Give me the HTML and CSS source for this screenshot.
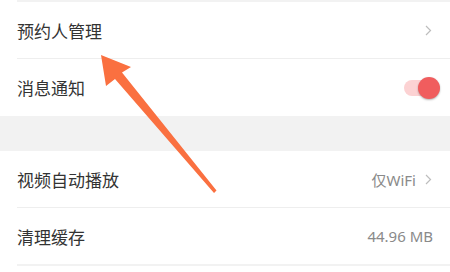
FILE: index.html
```html
<!DOCTYPE html>
<html lang="zh">
<head>
<meta charset="utf-8">
<link rel="stylesheet" href="styles.css">
</head>
<body>
<div class="page">
  <div class="top-line"></div>
  <div class="group">
    <div class="row">
      <span class="label">预约人管理</span>
      <span class="value"><svg class="chev" viewBox="0 0 7 11" width="7" height="11"><path d="M1 1 L5.5 5.5 L1 10" fill="none" stroke="#bdbdbd" stroke-width="1.2"/></svg></span>
    </div>
    <div class="row last">
      <span class="label">消息通知</span>
      <span class="toggle"><span class="knob"></span></span>
    </div>
  </div>
  <div class="gap"></div>
  <div class="group">
    <div class="row">
      <span class="label">视频自动播放</span>
      <span class="value">仅WiFi<svg class="chev" viewBox="0 0 7 11" width="7" height="11"><path d="M1 1 L5.5 5.5 L1 10" fill="none" stroke="#bdbdbd" stroke-width="1.2"/></svg></span>
    </div>
    <div class="row bottom">
      <span class="label">清理缓存</span>
      <span class="value">44.96 MB</span>
    </div>
  </div>
  <svg class="arrow" viewBox="0 0 450 272" width="450" height="272">
    <polygon points="101,55 131,67 122,72.5 216.5,190.5 214,193 115,79 106,86" fill="#fa7040"/>
  </svg>
</div>
</body>
</html>
```
FILE: styles.css
```css
* { box-sizing: border-box; }
html, body { margin: 0; padding: 0; background: #fff; }
.page {
  position: relative;
  width: 450px;
  height: 272px;
  overflow: hidden;
  font-family: "Noto Sans CJK SC", "Noto Sans", sans-serif;
  color: #333;
}
.top-line {
  height: 2px;
  margin-left: 17px;
  background: #f2f2f2;
}
.group { background: #fff; }
.row {
  display: flex;
  align-items: center;
  justify-content: space-between;
  height: 57px;
  margin-left: 17px;
  padding-right: 17px;
  border-bottom: 1px solid #eeeeee;
}
.row.last { border-bottom: none; height: 57px; }
.row.bottom { border-bottom: 2px solid #f2f2f2; height: 58px; }
.label {
  font-size: 17px;
  line-height: 1;
  color: #333;
}
.value {
  display: flex;
  align-items: center;
  gap: 9px;
  font-family: "Noto Sans", "Noto Sans CJK SC", sans-serif;
  font-size: 15px;
  color: #8a8a8a;
}
.value .chev { display: block; margin-right: 1px; }
.gap {
  height: 35px;
  background: #f2f2f2;
}
.toggle {
  position: relative;
  width: 36px;
  height: 22px;
  margin-right: -7px;
}
.toggle::before {
  content: "";
  position: absolute;
  left: 0;
  top: 3px;
  width: 32px;
  height: 16px;
  border-radius: 8px;
  background: #fcd2d3;
}
.knob {
  position: absolute;
  right: 0;
  top: 0;
  width: 22px;
  height: 22px;
  border-radius: 50%;
  background: #f05d5e;
  box-shadow: 0 1px 2px rgba(0,0,0,0.3);
}
.arrow {
  position: absolute;
  left: 0;
  top: 0;
}
```
